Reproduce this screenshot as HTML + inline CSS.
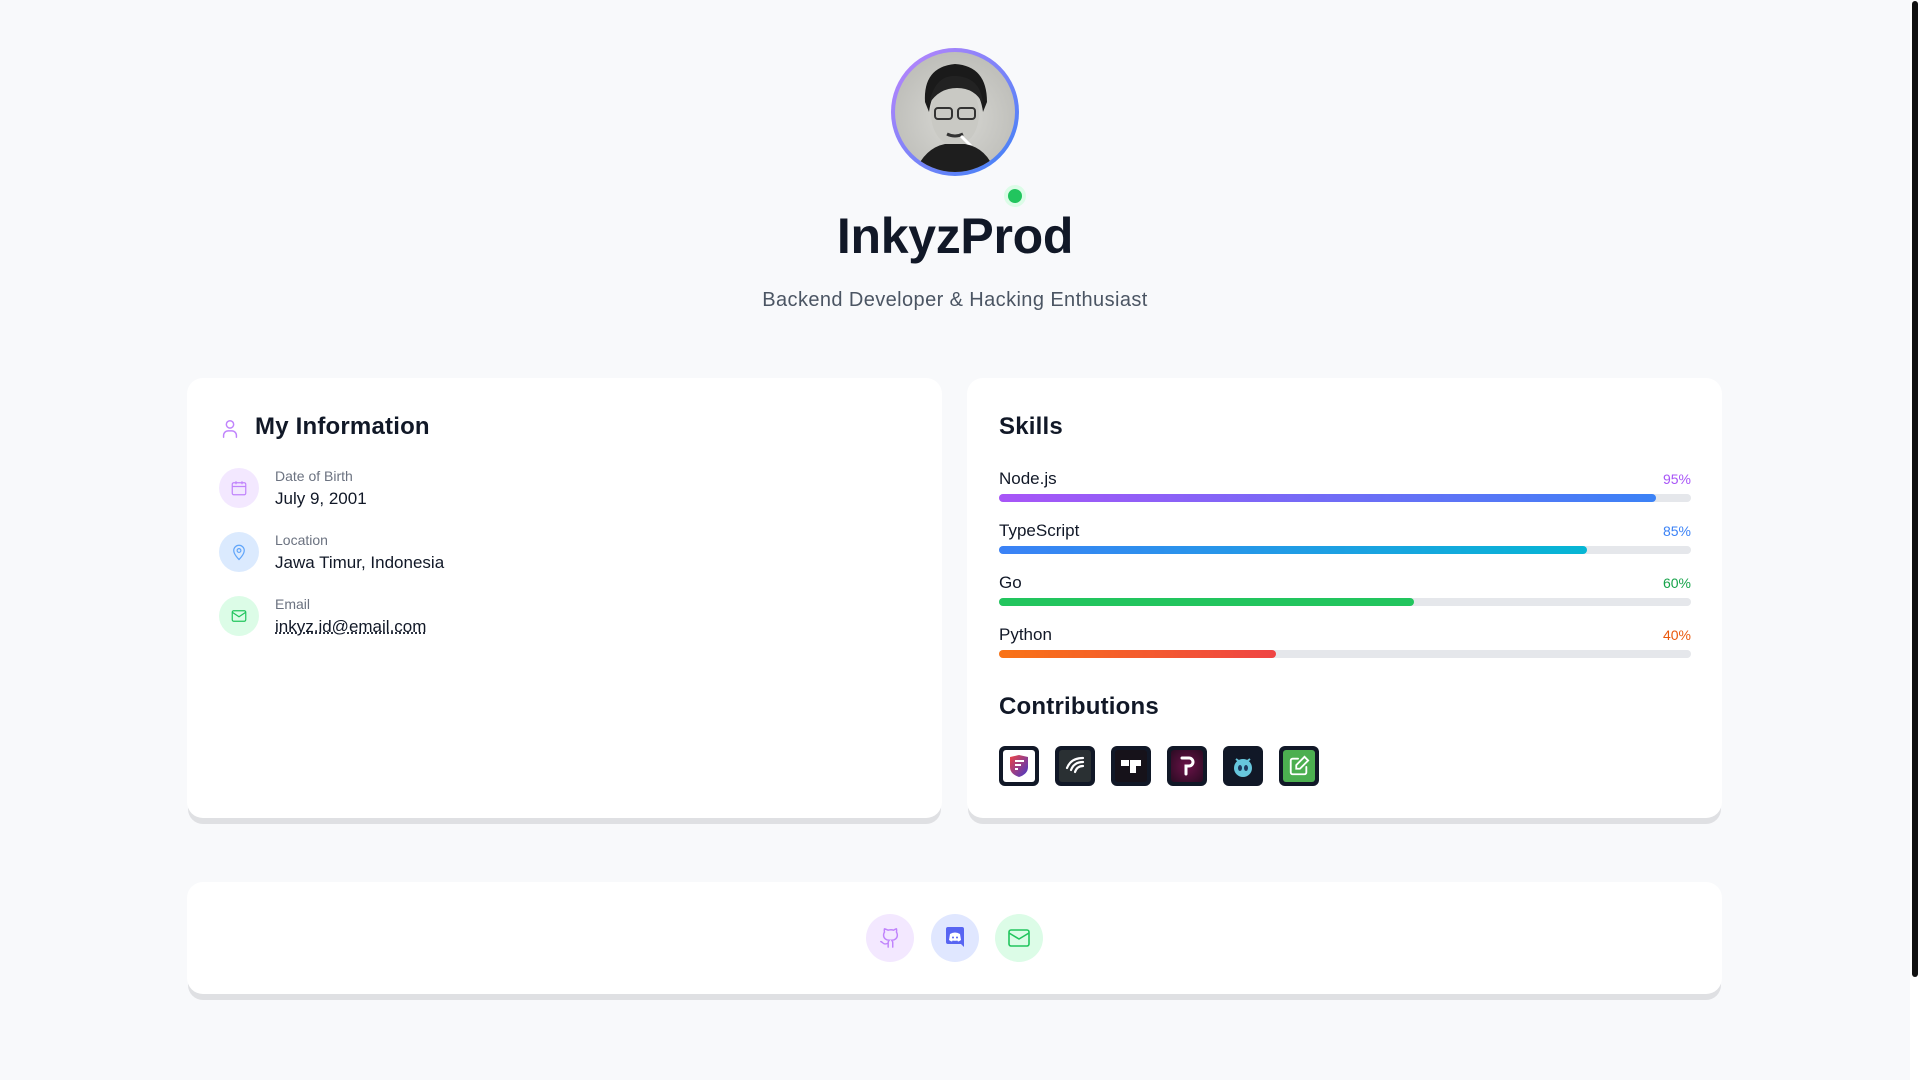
<!DOCTYPE html>
<html><head><meta charset="utf-8"><style>
*{box-sizing:border-box;margin:0;padding:0}
html,body{width:1920px;height:1080px;overflow:hidden}
body{background:#f8f9fb;font-family:"Liberation Sans",sans-serif;color:#111827;position:relative}
.sb{position:absolute;left:1910px;top:0;width:10px;height:1080px;background:#fff}
.sb div{position:absolute;left:2px;top:1px;width:6px;height:976px;background:#111;border-radius:3px}
.av{position:absolute;left:891px;top:48px;width:128px;height:128px;border-radius:50%;background:linear-gradient(135deg,#c084fc,#3b82f6);padding:4px}
.av .in{width:100%;height:100%;border-radius:50%;background:radial-gradient(circle at 50% 55%,#d8d8d4,#b5b5b0);overflow:hidden;position:relative}
.dot{position:absolute;left:1004px;top:185px;width:22px;height:22px;border-radius:50%;background:#22c55e;border:4px solid #dcfce7}
h1{position:absolute;left:0;width:1910px;text-align:center;top:207px;font-size:50px;font-weight:700;letter-spacing:-0.3px}
.sub{position:absolute;left:0;width:1910px;text-align:center;top:289px;font-size:20px;color:#4b5563;letter-spacing:0.4px}
.card{position:absolute;background:#fff;border-radius:16px;box-shadow:0 7px 0 -1px #dfe0e3}
.inner{position:absolute;left:0;top:3px;width:100%}
h2{font-size:24px;font-weight:700;letter-spacing:0.2px}
.row{position:absolute;left:32px;height:40px}
.ic{position:absolute;left:0;top:0;width:40px;height:40px;border-radius:50%;display:flex;align-items:center;justify-content:center}
.lab{position:absolute;left:56px;top:0px;font-size:14px;color:#6b7280;white-space:nowrap}
.val{position:absolute;left:56px;top:21px;font-size:17px;color:#111827;white-space:nowrap}
.sk{position:absolute;left:32px;width:692px}
.sk .n{font-size:17px;position:absolute;top:0;left:0}
.sk .p{font-size:14px;position:absolute;top:2px;right:0}
.sk .t{position:absolute;top:25px;left:0;width:692px;height:8px;border-radius:4px;background:#e5e7eb}
.sk .f{height:8px;border-radius:4px}
.ci{position:absolute;top:746px;width:40px;height:40px;border-radius:6px;background:#111827;padding:4px}
.ci div{width:100%;height:100%;border-radius:3px;display:flex;align-items:center;justify-content:center}
.so{position:absolute;top:914px;width:48px;height:48px;border-radius:50%;display:flex;align-items:center;justify-content:center}
</style></head><body>
<div class="sb"><div></div></div>
<div class="av"><div class="in">
<svg width="120" height="120" viewBox="0 0 120 120"><path d="M30 50 Q28 15 60 12 Q92 14 92 50 L88 60 Q84 30 60 30 Q38 30 34 60Z" fill="#1a1a1a"/><ellipse cx="60" cy="62" rx="24" ry="32" fill="#c9c9c4"/><path d="M34 52 Q40 22 62 24 Q86 26 88 52 Q80 36 62 36 Q44 36 34 52Z" fill="#222"/><rect x="40" y="56" width="17" height="11" rx="3" fill="none" stroke="#333" stroke-width="2"/><rect x="63" y="56" width="17" height="11" rx="3" fill="none" stroke="#333" stroke-width="2"/><path d="M52 82 Q60 86 68 82" stroke="#333" stroke-width="3" fill="none"/><path d="M66 84 L76 94" stroke="#fff" stroke-width="3"/><path d="M20 120 Q30 96 50 92 L70 92 Q92 96 100 120Z" fill="#1e1e1e"/></svg>
</div></div>
<div class="dot"></div>
<h1>InkyzProd</h1>
<div class="sub">Backend Developer &amp; Hacking Enthusiast</div>

<div class="card" style="left:187px;top:378px;width:755px;height:440px"><div class="inner">
<svg style="position:absolute;left:32px;top:37px" width="22" height="22" viewBox="0 0 24 24" fill="none" stroke="#c084fc" stroke-width="1.6" stroke-linecap="round"><circle cx="12" cy="7" r="4"/><path d="M5 21v-2a5 5 0 0 1 5-5h4a5 5 0 0 1 5 5v2"/></svg>
<h2 style="position:absolute;left:68px;top:32px">My Information</h2>
<div class="row" style="top:87px"><div class="ic" style="background:#f3e8ff"><svg width="18" height="18" viewBox="0 0 24 24" fill="none" stroke="#c084fc" stroke-width="1.6"><rect x="3" y="5" width="18" height="16" rx="2"/><path d="M3 10h18M8 3v4M16 3v4"/></svg></div><div class="lab">Date of Birth</div><div class="val">July 9, 2001</div></div>
<div class="row" style="top:151px"><div class="ic" style="background:#dbeafe"><svg width="18" height="18" viewBox="0 0 24 24" fill="none" stroke="#60a5fa" stroke-width="1.6"><path d="M12 22s7-6.5 7-12a7 7 0 0 0-14 0c0 5.5 7 12 7 12z"/><circle cx="12" cy="10" r="2.5"/></svg></div><div class="lab">Location</div><div class="val">Jawa Timur, Indonesia</div></div>
<div class="row" style="top:215px"><div class="ic" style="background:#dcfce7"><svg width="18" height="18" viewBox="0 0 24 24" fill="none" stroke="#22c55e" stroke-width="1.6"><rect x="3" y="5" width="18" height="14" rx="2"/><path d="M3 7l9 6 9-6"/></svg></div><div class="lab">Email</div><div class="val" style="text-decoration:underline dotted">inkyz.id@email.com</div></div>
</div></div>

<div class="card" style="left:967px;top:378px;width:755px;height:440px"><div class="inner">
<h2 style="position:absolute;left:32px;top:32px">Skills</h2>
<div class="sk" style="top:88px"><div class="n">Node.js</div><div class="p" style="color:#a855f7">95%</div><div class="t"><div class="f" style="width:95%;background:linear-gradient(90deg,#a855f7,#3b82f6)"></div></div></div>
<div class="sk" style="top:140px"><div class="n">TypeScript</div><div class="p" style="color:#3b82f6">85%</div><div class="t"><div class="f" style="width:85%;background:linear-gradient(90deg,#3b82f6,#06b6d4)"></div></div></div>
<div class="sk" style="top:192px"><div class="n">Go</div><div class="p" style="color:#16a34a">60%</div><div class="t"><div class="f" style="width:60%;background:#22c55e"></div></div></div>
<div class="sk" style="top:244px"><div class="n">Python</div><div class="p" style="color:#ea580c">40%</div><div class="t"><div class="f" style="width:40%;background:linear-gradient(90deg,#f97316,#ef4444)"></div></div></div>
<h2 style="position:absolute;left:32px;top:312px">Contributions</h2>
</div></div>
<div class="ci" style="left:999px"><div style="background:#fff"><svg width="22" height="24" viewBox="0 0 22 24"><defs><linearGradient id="g1" x1="0" y1="0" x2="1" y2="1"><stop offset="0" stop-color="#ef4444"/><stop offset="1" stop-color="#4338ca"/></linearGradient></defs><path d="M2 3 L11 1 L20 3 V13 Q20 20 11 23 Q2 20 2 13Z" fill="url(#g1)"/><path d="M7 7h9M7 11h6M7 15h3" stroke="#fff" stroke-width="2"/></svg></div></div>
<div class="ci" style="left:1055px"><div style="background:#2a3033"><svg width="24" height="24" viewBox="0 0 24 24" fill="none" stroke="#fff" stroke-width="2.2" stroke-linecap="round"><path d="M20 4 Q8 4 4 14"/><path d="M20 8 Q11 8 8 16"/><path d="M20 12 Q14 12 12 18"/></svg></div></div>
<div class="ci" style="left:1111px"><div style="background:#16121a"><svg width="22" height="16" viewBox="0 0 22 16" fill="#fff"><rect x="1" y="2" width="8" height="6"/><path d="M10 2h11v6h-5v7h-6z"/></svg></div></div>
<div class="ci" style="left:1167px"><div style="background:radial-gradient(circle,#6b1248,#2a0b22)"><svg width="16" height="22" viewBox="0 0 16 22" fill="none" stroke="#fff" stroke-width="3" stroke-linecap="round"><path d="M3 3h7a4 4 0 0 1 0 8H7v8"/></svg></div></div>
<div class="ci" style="left:1223px"><div style="background:#111827"><svg width="26" height="26" viewBox="0 0 26 26"><circle cx="13" cy="15" r="9" fill="#67c7dd"/><path d="M6 6l4 3M20 6l-4 3" stroke="#67c7dd" stroke-width="2"/><ellipse cx="10" cy="15" rx="2" ry="3" fill="#1e3a5f"/><ellipse cx="16" cy="15" rx="2" ry="3" fill="#1e3a5f"/></svg></div></div>
<div class="ci" style="left:1279px"><div style="background:#4caf50"><svg width="22" height="22" viewBox="0 0 24 24" fill="none" stroke="#fff" stroke-width="2" stroke-linecap="round"><path d="M11 4H5a2 2 0 0 0-2 2v13a2 2 0 0 0 2 2h13a2 2 0 0 0 2-2v-6"/><path d="M18 2l4 4-9 9H9v-4z"/></svg></div></div>

<div class="card" style="left:187px;top:882px;width:1535px;height:112px"></div>
<div class="so" style="left:866px;background:#f3e8ff"><svg width="22" height="22" viewBox="0 0 24 24" fill="none" stroke="#c084fc" stroke-width="1.6" stroke-linecap="round"><path d="M15 22v-4a4.8 4.8 0 0 0-1-3.5c3 0 6-2 6-5.5.1-1.3-.3-2.5-1-3.5.3-1.2.3-2.4 0-3.5 0 0-1 0-3 1.5a10 10 0 0 0-6 0C7 2 6 2 6 2c-.3 1.1-.3 2.3 0 3.5-.7 1-1.1 2.2-1 3.5 0 3.5 3 5.5 6 5.5-.4.5-.7 1.1-.9 1.7-.1.6-.1 1.2-.1 1.8v4"/><path d="M9 18c-4.5 2-5-2-7-2"/></svg></div>
<div class="so" style="left:931px;background:#e0e7ff"><svg width="22" height="24" viewBox="0 0 22 24"><path d="M2 3a2 2 0 0 1 2-2h14a2 2 0 0 1 2 2v18l-3-3H4a2 2 0 0 1-2-2z" fill="#5865f2"/><path d="M6 8q5-3 10 0l1 6q-2 1.5-3 1.5l-.7-1q-2.3.6-4.6 0l-.7 1q-1 0-3-1.5z" fill="#fff"/><circle cx="9" cy="11.5" r="1" fill="#5865f2"/><circle cx="13" cy="11.5" r="1" fill="#5865f2"/></svg></div>
<div class="so" style="left:995px;background:#dcfce7"><svg width="24" height="24" viewBox="0 0 24 24" fill="none" stroke="#22c55e" stroke-width="1.6"><rect x="2" y="4" width="20" height="16" rx="2"/><path d="M2 7l10 6 10-6"/></svg></div>
</body></html>
